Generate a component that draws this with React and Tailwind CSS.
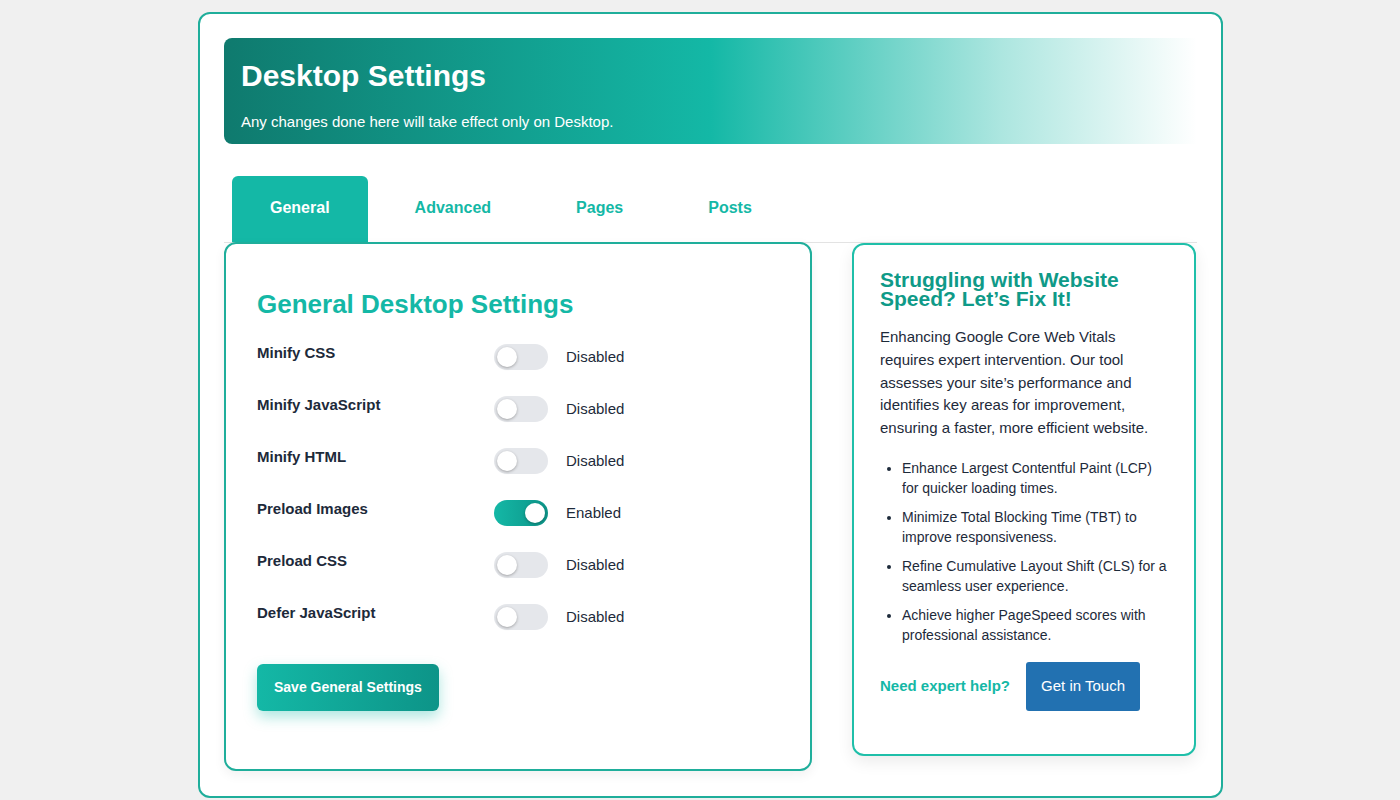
import React from "react";

const settings = [
  { label: "Minify CSS", on: false },
  { label: "Minify JavaScript", on: false },
  { label: "Minify HTML", on: false },
  { label: "Preload Images", on: true },
  { label: "Preload CSS", on: false },
  { label: "Defer JavaScript", on: false },
];

const tips = [
  "Enhance Largest Contentful Paint (LCP) for quicker loading times.",
  "Minimize Total Blocking Time (TBT) to improve responsiveness.",
  "Refine Cumulative Layout Shift (CLS) for a seamless user experience.",
  "Achieve higher PageSpeed scores with professional assistance.",
];

const Toggle = ({ on }) => (
  <div
    className={
      on
        ? "relative h-[26px] w-[54px] shrink-0 rounded-full bg-gradient-to-r from-[#14b8a6] to-[#0d9488]"
        : "relative h-[26px] w-[54px] shrink-0 rounded-full bg-[#e5e7eb]"
    }
  >
    <span
      className={
        on
          ? "absolute right-[3px] top-[3px] h-[20px] w-[20px] rounded-full bg-white shadow-[0_1px_3px_rgba(0,0,0,0.3)]"
          : "absolute left-[3px] top-[3px] h-[20px] w-[20px] rounded-full bg-white shadow-[0_1px_3px_rgba(0,0,0,0.3)]"
      }
    />
  </div>
);

export default function App() {
  const [tab, setTab] = React.useState("General");

  return (
    <div className="min-h-[800px] bg-[#f0f0f0] pl-[198px] pt-[12px] font-['Liberation_Sans',Arial,sans-serif]">
      <div className="w-[1025px] rounded-[12px] border-2 border-[#1fae9b] bg-white px-[24px] pt-[24px] pb-[25px]">
        {/* header banner */}
        <div className="h-[106px] rounded-l-[8px] bg-[linear-gradient(90deg,#0f7a6e_0%,#14b8a6_50%,rgba(20,184,166,0.35)_80%,rgba(255,255,255,0)_100%)] px-[17px] pt-[21px]">
          <h1 className="text-[30px] font-bold leading-[34px] text-white">Desktop Settings</h1>
          <p className="mt-[20px] text-[15px] leading-[18px] text-white">
            Any changes done here will take effect only on Desktop.
          </p>
        </div>

        {/* tabs */}
        <div className="mt-[32px] flex gap-[9px] border-b border-[#e3e3e3] pl-[8px]">
          {["General", "Advanced", "Pages", "Posts"].map(t => (
            <button
              key={t}
              onClick={() => setTab(t)}
              className={
                t === tab
                  ? "h-[66px] rounded-t-[6px] bg-[#14b8a6] px-[38px] pb-[2px] text-[16px] font-bold text-white"
                  : "h-[66px] rounded-t-[6px] px-[38px] pb-[2px] text-[16px] font-bold text-[#14b8a6]"
              }
            >
              {t}
            </button>
          ))}
        </div>

        <div className="flex items-start gap-[40px]">
          {/* settings card */}
          <div className="-mt-px w-[588px] rounded-[12px] border-2 border-[#1fae9b] bg-white px-[31px] pt-[45px] pb-[58px] shadow-[0_4px_12px_rgba(0,0,0,0.06)]">
            <h2 className="text-[26px] font-bold leading-[30px] text-[#14b8a6]">General Desktop Settings</h2>
            <div className="mt-[25px] flex flex-col gap-[26px]">
              {settings.map(s => (
                <div key={s.label} className="flex items-start">
                  <div className="w-[237px] text-[15px] font-bold leading-[18px] text-[#1d2a3a]">{s.label}</div>
                  <Toggle on={s.on} />
                  <div className="ml-[18px] pt-[4px] text-[15px] leading-[18px] text-[#1d2a3a]">
                    {s.on ? "Enabled" : "Disabled"}
                  </div>
                </div>
              ))}
            </div>
            <button className="mt-[34px] h-[47px] rounded-[6px] bg-gradient-to-r from-[#14b8a6] to-[#0d9488] px-[17px] text-[14px] font-bold text-white shadow-[0_6px_14px_rgba(20,184,166,0.35)]">
              Save General Settings
            </button>
          </div>

          {/* promo card */}
          <div className="w-[344px] rounded-[12px] border-2 border-[#1fbfa9] bg-white px-[26px] pt-[25px] pb-[43px] shadow-[0_6px_16px_rgba(0,0,0,0.08)]">
            <h3 className="text-[21px] font-bold leading-[19px] text-[#0f9a88]">
              Struggling with Website Speed? Let’s Fix It!
            </h3>
            <p className="mt-[18px] text-[15px] leading-[22.75px] text-[#1d2a3a]">
              Enhancing Google Core Web Vitals requires expert intervention. Our tool assesses your site’s performance
              and identifies key areas for improvement, ensuring a faster, more efficient website.
            </p>
            <ul className="mt-[18px] flex list-disc flex-col gap-[9px] pl-[22px] text-[14px] leading-[20px] text-[#1d2a3a]">
              {tips.map(t => (
                <li key={t}>{t}</li>
              ))}
            </ul>
            <div className="mt-[17px] flex items-center gap-[16px]">
              <span className="text-[15px] font-bold text-[#14b8a6]">Need expert help?</span>
              <button className="h-[49px] rounded-[3px] bg-[#2271b1] px-[15px] text-[15px] text-white">
                Get in Touch
              </button>
            </div>
          </div>
        </div>
      </div>
    </div>
  );
}
